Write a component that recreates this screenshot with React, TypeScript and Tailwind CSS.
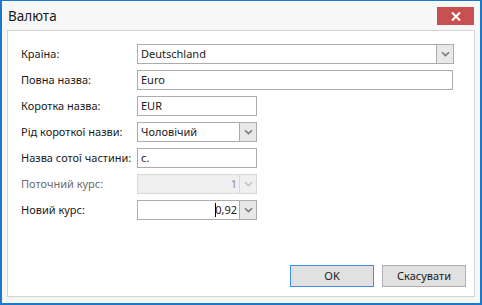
import React from "react";

const font = { fontFamily: '"Noto Sans", "Open Sans", sans-serif' };

function Chevron({ disabled }: { disabled?: boolean }) {
  return (
    <svg width="9" height="6" viewBox="0 0 9 6">
      <path
        d="M1 1.2 L4.5 4.6 L8 1.2"
        fill="none"
        stroke={disabled ? "#c4c4c4" : "#7a7a7a"}
        strokeWidth="1.6"
      />
    </svg>
  );
}

function TextBox({ value, wide }: { value: string; wide?: boolean }) {
  return (
    <div
      className={`flex h-[20px] items-center border border-[#acacac] bg-white pl-[3px] text-[11px] text-[#1a1a1a] ${
        wide ? "w-[316px]" : "w-[120px]"
      }`}
    >
      {value}
    </div>
  );
}

function Combo({
  value,
  wide,
  disabled,
  right,
  caret,
}: {
  value: string;
  wide?: boolean;
  disabled?: boolean;
  right?: boolean;
  caret?: boolean;
}) {
  return (
    <div
      className={`flex h-[20px] border ${
        disabled ? "border-[#d9d9d9] bg-[#f0f0f0]" : "border-[#acacac] bg-white"
      } ${wide ? "w-[317px]" : "w-[120px]"}`}
    >
      <div
        className={`flex flex-1 items-center text-[11px] ${
          right ? "justify-end pr-[2px]" : "pl-[3px]"
        } ${disabled ? "text-[#8c8c8c]" : "text-[#1a1a1a]"}`}
      >
        {caret && <span className="mr-[-1px] h-[14px] w-px bg-black" />}
        {value}
      </div>
      <div
        className={`flex w-[17px] items-center justify-center border-l ${
          disabled ? "border-[#d9d9d9] bg-[#f0f0f0]" : "border-[#acacac] bg-[#e8e8e8]"
        }`}
      >
        <Chevron disabled={disabled} />
      </div>
    </div>
  );
}

const rows: { label: string; disabled?: boolean; field: React.ReactNode }[] = [
  { label: "Країна:", field: <Combo value="Deutschland" wide /> },
  { label: "Повна назва:", field: <TextBox value="Euro" wide /> },
  { label: "Коротка назва:", field: <TextBox value="EUR" /> },
  { label: "Рід короткої назви:", field: <Combo value="Чоловічий" /> },
  { label: "Назва сотої частини:", field: <TextBox value="с." /> },
  { label: "Поточний курс:", disabled: true, field: <Combo value="1" right disabled /> },
  { label: "Новий курс:", field: <Combo value="0,92" right caret /> },
];

export default function App() {
  return (
    <div
      className="flex h-[305px] w-[482px] flex-col border-x-2 border-t border-b-2 border-[#1979ca] bg-[#f7f7f7]"
      style={font}
    >
      <div className="flex h-[29px] items-start justify-between pl-[6px] pr-[6px]">
        <span className="mt-[6px] text-[13.5px] leading-[18px] text-[#1a1a1a]">Валюта</span>
        <div className="mt-[6px] flex h-[18px] w-[37px] items-center justify-center bg-[#c75050]">
          <svg width="10" height="9" viewBox="0 0 10 9">
            <path d="M1 0.5 L9 8.5 M9 0.5 L1 8.5" stroke="#fff" strokeWidth="2" />
          </svg>
        </div>
      </div>
      <div className="mx-[5px] mb-[6px] flex flex-1 flex-col border border-[#d4d4d4] bg-white pt-[13px] pr-[8px] pb-[9px] pl-[13px]">
        <div className="flex flex-col gap-[6px]">
          {rows.map((r) => (
            <div key={r.label} className="flex items-center">
              <span
                className={`w-[116px] whitespace-nowrap text-[11px] ${
                  r.disabled ? "text-[#6d6d6d]" : "text-[#1a1a1a]"
                }`}
              >
                {r.label}
              </span>
              {r.field}
            </div>
          ))}
        </div>
        <div className="mt-auto flex justify-end gap-[8px]">
          <button className="h-[22px] w-[84px] border border-[#3c8ee8] bg-[#e1e1e1] text-[11px] text-[#1a1a1a]">
            OK
          </button>
          <button className="h-[22px] w-[84px] border border-[#adadad] bg-[#e1e1e1] text-[11px] text-[#1a1a1a]">
            Скасувати
          </button>
        </div>
      </div>
    </div>
  );
}
